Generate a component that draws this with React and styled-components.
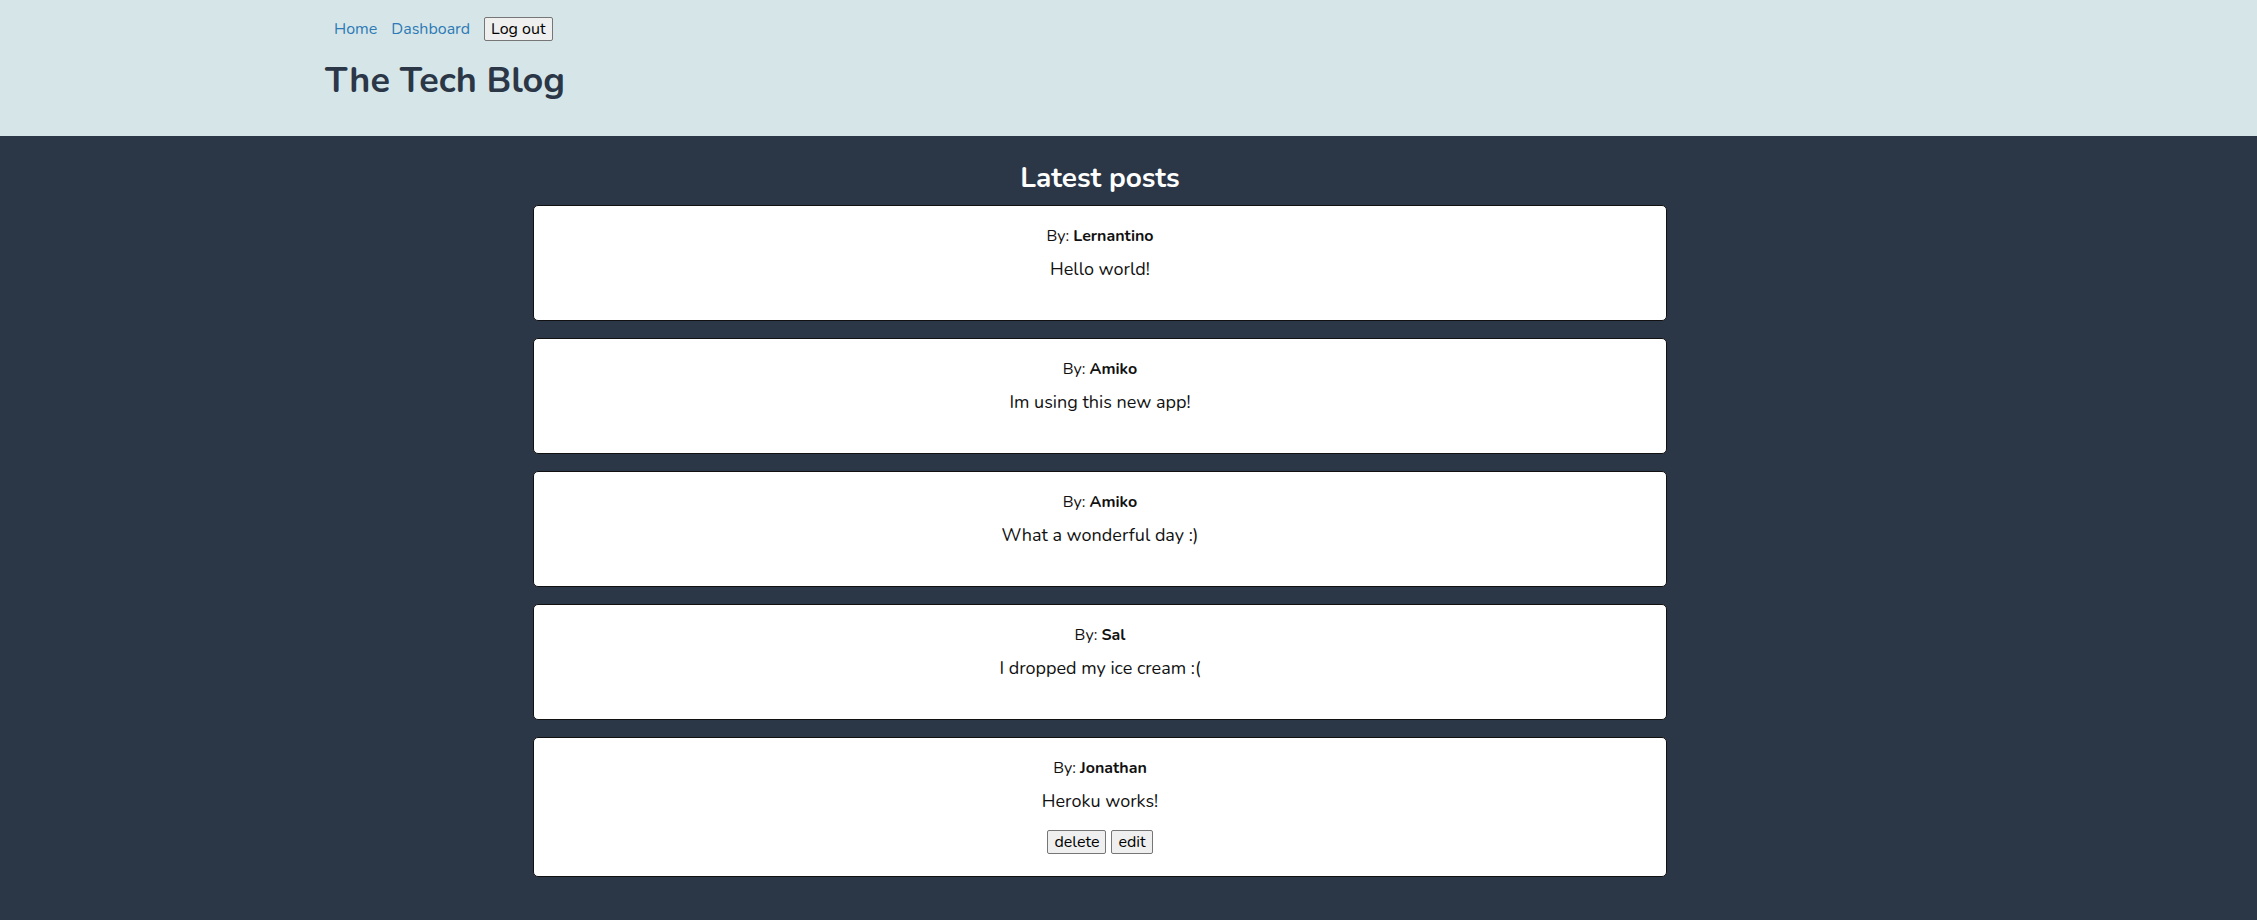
import React from 'react';
import styled, { createGlobalStyle } from 'styled-components';

const COLORS = {
  header: '#d6e6e8',
  dark: '#2b3647',
  link: '#2d7ab5',
  text: '#111111',
};

const posts = [
  { id: 1, author: 'Lernantino', body: 'Hello world!' },
  { id: 2, author: 'Amiko', body: 'Im using this new app!' },
  { id: 3, author: 'Amiko', body: 'What a wonderful day :)' },
  { id: 4, author: 'Sal', body: 'I dropped my ice cream :(' },
  { id: 5, author: 'Jonathan', body: 'Heroku works!', mine: true },
];

const GlobalStyle = createGlobalStyle`
  * { box-sizing: border-box; }
  body {
    margin: 0;
    font-family: "Nunito", "Noto Sans", "Open Sans", sans-serif;
    background: ${COLORS.dark};
  }
`;

const Header = styled.header`
  background: ${COLORS.header};
  height: 136px;
  padding: 17px 0 0 325px;
`;

const Nav = styled.nav`
  display: flex;
  align-items: center;
  gap: 14px;
  padding-left: 9px;
  height: 24px;
`;

const NavLink = styled.a`
  color: ${COLORS.link};
  text-decoration: none;
  font-size: 16px;
`;

const Button = styled.button`
  font-family: inherit;
  font-size: 16px;
  line-height: 20px;
  height: 24px;
  padding: 0 6px;
  color: #000;
  background: #efefef;
  border: 1px solid #767676;
  border-radius: 2px;
`;

const Title = styled.h1`
  margin: 15px 0 0;
  font-size: 36px;
  line-height: 50px;
  font-weight: 700;
  color: ${COLORS.dark};
`;

const Main = styled.main`
  min-height: 784px;
  padding: 23px 57px 40px 0;
`;

const Feed = styled.section`
  width: 1134px;
  margin: 0 auto;
  display: flex;
  flex-direction: column;
  gap: 17px;
`;

const Heading = styled.h2`
  margin: 0 0 -9px;
  text-align: center;
  color: #fff;
  font-size: 28px;
  line-height: 38px;
  font-weight: 700;
`;

const Card = styled.article`
  background: #fff;
  border: 1px solid #111;
  border-radius: 5px;
  padding: 19px 0 22px;
  text-align: center;
  color: ${COLORS.text};
`;

const Author = styled.p`
  margin: 0;
  font-size: 16px;
  line-height: 22px;
`;

const Body = styled.p`
  margin: 10px 0 16px;
  font-size: 18px;
  line-height: 25px;
`;

const Actions = styled.div`
  display: flex;
  justify-content: center;
  gap: 5px;
`;

export default function App() {
  return (
    <>
      <GlobalStyle />
      <Header>
        <Nav>
          <NavLink href="#">Home</NavLink>
          <NavLink href="#">Dashboard</NavLink>
          <Button>Log out</Button>
        </Nav>
        <Title>The Tech Blog</Title>
      </Header>
      <Main>
        <Feed>
          <Heading>Latest posts</Heading>
          {posts.map(post => (
            <Card key={post.id}>
              <Author>
                By: <b>{post.author}</b>
              </Author>
              <Body>{post.body}</Body>
              {post.mine && (
                <Actions>
                  <Button>delete</Button>
                  <Button>edit</Button>
                </Actions>
              )}
            </Card>
          ))}
        </Feed>
      </Main>
    </>
  );
}
